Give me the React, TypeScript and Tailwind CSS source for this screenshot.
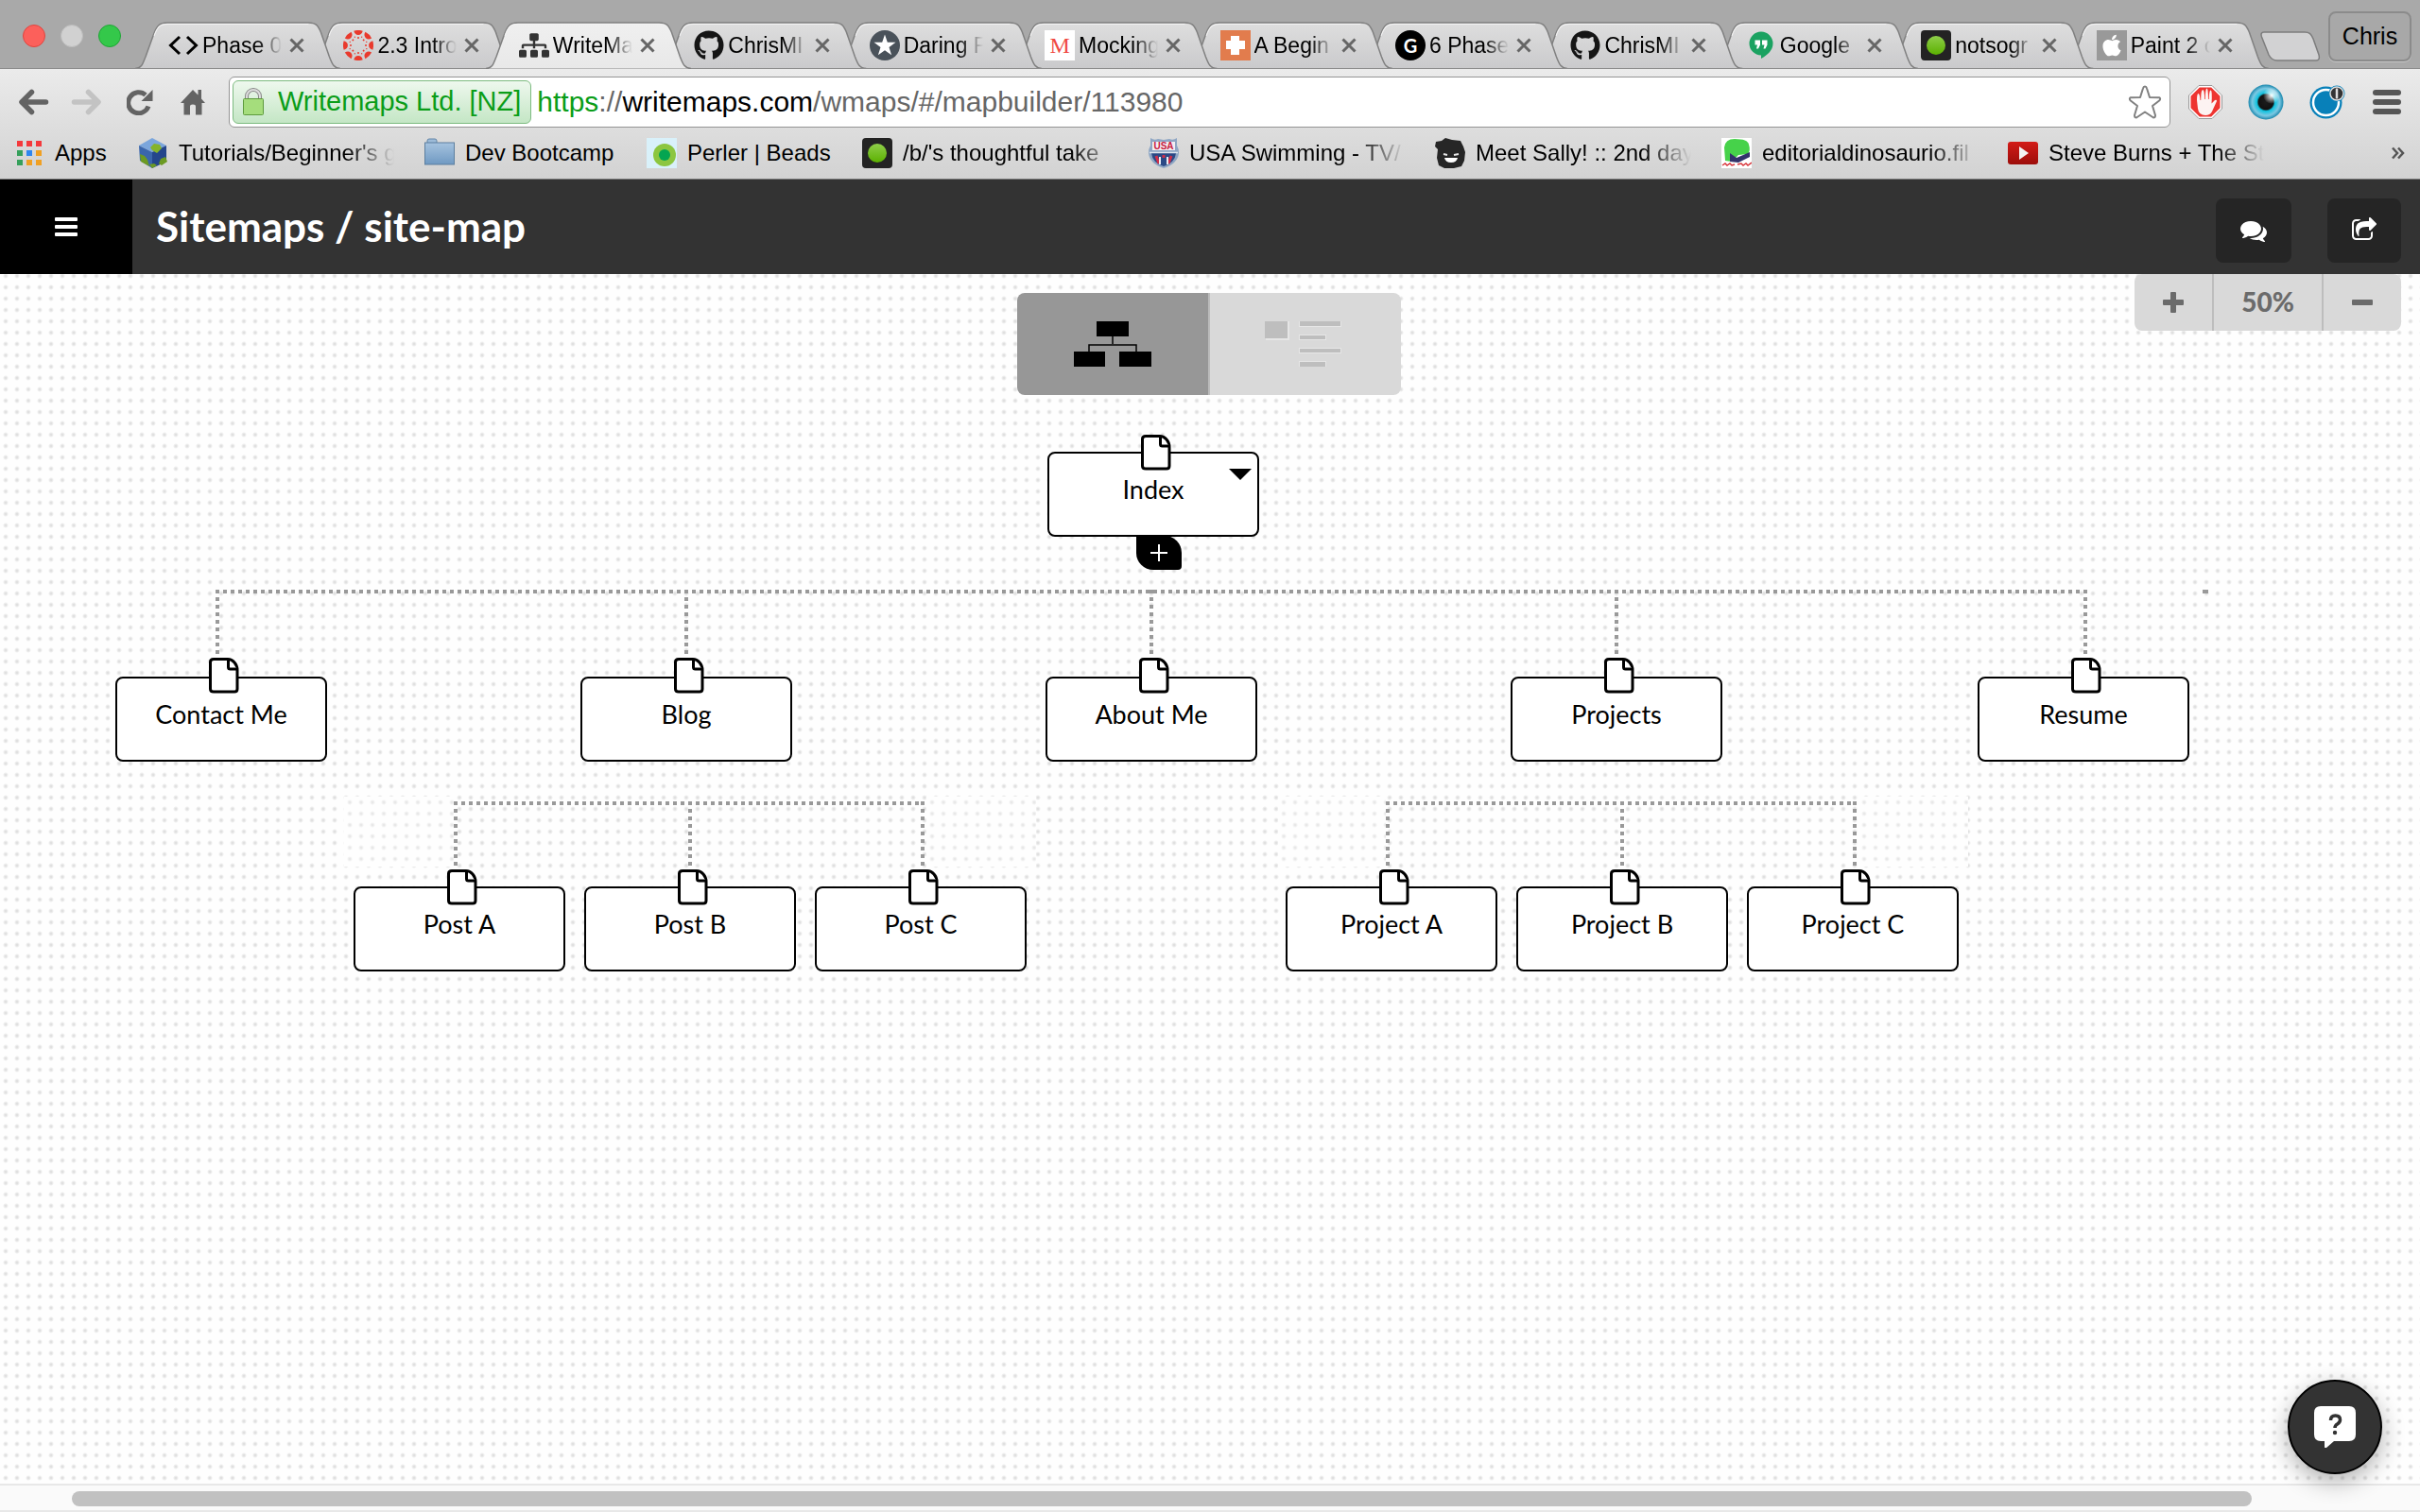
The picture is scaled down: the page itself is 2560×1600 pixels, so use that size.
import React from "react";
import type { ReactNode } from "react";
import { FaSitemap, FaGithub, FaApple } from "react-icons/fa";

/* ---------- favicons ---------- */

function CodeIcon() {
  return (
    <svg viewBox="0 0 32 32" className="size-8" fill="none" stroke="#000" strokeWidth="3">
      <path d="M12 7 2.5 16l9.5 9M20 7l9.5 9-9.5 9" />
    </svg>
  );
}

function CanvasIcon() {
  return (
    <svg viewBox="0 0 32 32" className="size-8" fill="#e93a2d">
      {[0, 45, 90, 135, 180, 225, 270, 315].map((a) => (
        <g key={a} transform={`rotate(${a} 16 16)`}>
          <path d="M11.3.7Q16-.8 20.7.7 19.8 4.8 16 4.9 12.2 4.8 11.3.7z" />
          <circle cx="16" cy="8" r="1" />
          <circle cx="16" cy="6.500" r=".7" transform="rotate(22.5 16 16)" />
        </g>
      ))}
    </svg>
  );
}

function StarIcon() {
  return (
    <svg viewBox="0 0 32 32" className="size-8">
      <circle cx="16" cy="16" r="16" fill="#4a525a" />
      <path d="M16 4.500l2.800 8.200 8.700.1-7 5.200 2.600 8.300-7.100-5-7.100 5 2.600-8.300-7-5.200 8.700-.1z" fill="#fff" />
    </svg>
  );
}

function LetterM() {
  return (
    <span className="flex size-8 items-center justify-center bg-white font-['Liberation_Serif',serif] text-[24px] leading-8 text-[#f04a42]">
      M
    </span>
  );
}

function CrossIcon() {
  return (
    <svg viewBox="0 0 32 32" className="size-8">
      <path d="M0 0h32v32H0z" fill="#e27c4d" />
      <path d="M11 6h9v5h6v9h-6v6h-9v-6H6v-9h5z" fill="#fff" />
    </svg>
  );
}

function LetterG() {
  return (
    <span className="flex size-8 items-center justify-center rounded-full bg-black font-['Lato',sans-serif] text-[20px] font-bold text-white">
      G
    </span>
  );
}

function HangoutsIcon() {
  return (
    <svg viewBox="0 0 32 32" className="size-8">
      <path d="M16 1.500a12.500 12.500 0 1 1 0 25V30C9 26 3.500 21 3.500 14A12.500 12.500 0 0 1 16 1.500z" fill="#1ba261" transform="matrix(-1 0 0 1 32 0)" />
      <path d="M9.500 10.500h5.500v5l-2 4h-2l1-4H9.500zM17 10.500h5.500v5l-2 4h-2l1-4H17z" fill="#fff" />
    </svg>
  );
}

function GreenDotIcon() {
  return (
    <svg viewBox="0 0 32 32" className="size-8">
      <defs>
        <linearGradient id="dot" x1="0" x2="0" y1="0" y2="1">
          <stop offset="0" stopColor="#8fce4a" />
          <stop offset="1" stopColor="#5bb000" />
        </linearGradient>
      </defs>
      <rect width="32" height="32" rx="4" fill="#232323" />
      <circle cx="16" cy="16" r="10" fill="url(#dot)" />
    </svg>
  );
}

function AppleIcon() {
  return (
    <span className="flex size-8 items-center justify-center bg-[#999]">
      <FaApple className="size-[26px] text-white" />
    </span>
  );
}

/* ---------- bookmark icons ---------- */

function AppsIcon() {
  const colors = ["#f4393c", "#f4393c", "#f4393c", "#36a05b", "#2e86f0", "#f0a023", "#36a05b", "#f0a023", "#f0a023"];
  return (
    <svg viewBox="0 0 26 26" className="size-[26px]">
      {colors.map((c, i) => (
        <rect key={i} x={(i % 3) * 10} y={Math.floor(i / 3) * 10} width="6" height="6" fill={c} />
      ))}
    </svg>
  );
}

function CubeIcon() {
  return (
    <svg viewBox="0 0 32 32" className="size-8">
      <path d="M15 0 1 8l14 7 15-7z" fill="#7ba6dc" />
      <path d="M1 8l14 7v17L2 24z" fill="#3a66ac" />
      <path d="M30 8l-15 7v17l15-7z" fill="#24468c" />
      <path d="M17 6l6 1 2 4-5 5-5-3-2-3z" fill="#85b32a" />
      <path d="M2 17l5 2 3 4 2 7-9-5zM24 22l5-2 2 5-6 4-3-2zM12 28l5-1 3 2-5 3z" fill="#6c9a22" />
    </svg>
  );
}

function FolderIcon() {
  return (
    <svg viewBox="0 0 32 32" className="size-8">
      <defs>
        <linearGradient id="folder" x1="0" x2="0" y1="0" y2="1">
          <stop offset="0" stopColor="#a6c3df" />
          <stop offset="1" stopColor="#6f99c2" />
        </linearGradient>
      </defs>
      <path d="M3 5V3q0-2 2-2h6q2 0 2 2v2" fill="#9dbbd8" stroke="#6386a8" />
      <rect x=".5" y="5" width="31" height="23" fill="url(#folder)" stroke="#5c7f9f" />
    </svg>
  );
}

function PerlerIcon() {
  return (
    <svg viewBox="0 0 32 32" className="size-8">
      <path d="M0 0h32v32H0z" fill="#d9f1fa" />
      <circle cx="19" cy="18" r="12" fill="#8cc63f" />
      <circle cx="19" cy="18" r="6" fill="#04a551" />
    </svg>
  );
}

function ShieldIcon() {
  return (
    <svg viewBox="0 0 32 32" className="size-8">
      <path d="M2 0q4 3 8 1l6 1 6-1q4 2 8-1v8q2 3 2 8-1 11-16 16Q1 27 0 16q0-5 2-8z" fill="#8ea6c4" />
      <path d="M4 4h24v9H4z" fill="#f3eef2" />
      <text x="16" y="12" textAnchor="middle" fontSize="10" fontWeight="700" fontFamily="Liberation Sans, sans-serif" fill="#c8203f">
        USA
      </text>
      <path d="M3 16h26q-1 10-13 14Q4 26 3 16z" fill="#2b4a86" />
      <path d="M8 19l3 8M16 18v3M24 19l-3 8" stroke="#d02f4a" strokeWidth="3" />
      <path d="M12 20v8M20 20v8" stroke="#e9edf3" strokeWidth="2" />
      <path d="M1 15.500h30" stroke="#dfe6ee" strokeWidth="1.500" />
    </svg>
  );
}

function SallyIcon() {
  return (
    <svg viewBox="0 0 32 32" className="size-8">
      <path d="M1 4l6-1 4-3 7 2 9 1 3 6 2 6-1 9-3 6-8 2H10l-6-3-2-8 1-9-3-3z" fill="#262626" />
      <path d="M9 17l4 1M20 18l5-1" stroke="#e5e5e5" strokeWidth="2" />
      <path d="M10 21h14q-1 5-7 5t-7-5z" fill="#fff" />
    </svg>
  );
}

function DinoIcon() {
  return (
    <svg viewBox="0 0 32 32" className="size-8">
      <path d="M0 0h32v32H0z" fill="#fff" />
      <path d="M3 10Q4 1 14 1q14 0 15 6 2 6-1 10l-10 1-7 7-7-1z" fill="#46d24a" />
      <path d="M9 16l7 5 14-6v5l-12 6-9-1z" fill="#33336b" />
      <path d="M1 29l3-2 2 2 3-2 2 2 3-1M17 28l4-1 2 2 3-2 2 2 4-3" stroke="#d8343a" strokeWidth="1.500" fill="none" />
    </svg>
  );
}

function PlayIcon() {
  return (
    <svg viewBox="0 0 32 32" className="size-8">
      <defs>
        <linearGradient id="play" x1="0" x2="0" y1="0" y2="1">
          <stop offset="0" stopColor="#d31b17" />
          <stop offset="1" stopColor="#9c0d0a" />
        </linearGradient>
      </defs>
      <rect y="4" width="32" height="24" rx="3" fill="url(#play)" />
      <path d="M12 9l10 7-10 7z" fill="#f3f3f3" />
    </svg>
  );
}

/* ---------- browser chrome ---------- */

type Tab = { title: string; icon: ReactNode; active?: boolean };

const tabs: Tab[] = [
  { title: "Phase 0", icon: <CodeIcon /> },
  { title: "2.3 Intro", icon: <CanvasIcon /> },
  { title: "WriteMap", icon: <FaSitemap className="size-8 text-[#333]" />, active: true },
  { title: "ChrisMI", icon: <FaGithub className="size-8 text-[#151515]" /> },
  { title: "Daring F", icon: <StarIcon /> },
  { title: "Mocking", icon: <LetterM /> },
  { title: "A Begin", icon: <CrossIcon /> },
  { title: "6 Phase", icon: <LetterG /> },
  { title: "ChrisMI", icon: <FaGithub className="size-8 text-[#151515]" /> },
  { title: "Google", icon: <HangoutsIcon /> },
  { title: "notsogr", icon: <GreenDotIcon /> },
  { title: "Paint 2 o", icon: <AppleIcon /> },
];

const tabOutline = "M0 49.500C7 49.500 8 44 11 37L20 12C23 4 26 1 34 1H183C191 1 193 4 196 11L205 37C208 45 210 49.500 217 49.500";

function BrowserTab({ tab, index }: { tab: Tab; index: number }) {
  return (
    <div role="tab" aria-selected={!!tab.active} className="relative h-[50px] min-w-0 flex-1" style={{ zIndex: tab.active ? 30 : 12 - index }}>
      <svg viewBox="0 0 217 50" preserveAspectRatio="none" className="absolute top-0 left-0 h-[50px] w-[calc(100%+32px)]">
        <path d={tabOutline} fill={tab.active ? "url(#tab-active)" : "url(#tab-idle)"} stroke="#808080" strokeWidth="1.500" />
        <path d="M20 15C23 6 26 2.500 34 2.500H183" fill="none" stroke="#f4f4f4" strokeWidth="1" />
      </svg>
      <div className="relative flex h-[50px] items-center pl-[35px]">
        <span className="size-8 shrink-0">{tab.icon}</span>
        <span className="ml-1 w-[84px] overflow-hidden text-[23px] leading-8 whitespace-nowrap text-black [mask-image:linear-gradient(to_right,black_70%,transparent_100%)]">
          {tab.title}
        </span>
        <button aria-label={`Close ${tab.title}`} className="ml-2 size-4 shrink-0">
          <svg viewBox="0 0 16 16" className="size-4" stroke="#666" strokeWidth="3">
            <path d="M1.500 1.500l13 13M14.500 1.500l-13 13" />
          </svg>
        </button>
      </div>
    </div>
  );
}

function TabStrip() {
  return (
    <div className="relative isolate flex h-[73px] items-end bg-[#a9a9a9]">
      <svg className="absolute size-0" aria-hidden="true">
        <defs>
          <linearGradient id="tab-idle" x1="0" x2="0" y1="0" y2="1">
            <stop offset="0" stopColor="#dedede" />
            <stop offset="1" stopColor="#cacacc" />
          </linearGradient>
          <linearGradient id="tab-active" x1="0" x2="0" y1="0" y2="1">
            <stop offset="0" stopColor="#f0f0f0" />
            <stop offset="1" stopColor="#e8e8e8" />
          </linearGradient>
        </defs>
      </svg>
      <div className="absolute inset-x-0 bottom-0 z-20 h-px bg-[#8c8c8c]" />
      <div className="mr-[15px] flex gap-4 self-start pt-[26px] pl-6">
        <button aria-label="Close window" className="size-6 rounded-full border border-[#e0443e] bg-[#fc605b]" />
        <button aria-label="Minimise window" className="size-6 rounded-full border border-[#bcbcbc] bg-[#d1d1d1]" />
        <button aria-label="Zoom window" className="size-6 rounded-full border border-[#1fa535] bg-[#34c84a]" />
      </div>
      <div role="tablist" className="flex min-w-0 flex-1">
        {tabs.map((tab, i) => (
          <BrowserTab key={i} tab={tab} index={i} />
        ))}
      </div>
      <button aria-label="New tab" className="mb-2 ml-[23px] h-8 w-16 shrink-0">
        <svg viewBox="0 0 64 32" className="h-8 w-16">
          <path d="M4 1h43c5 0 7 2 9 7l6 17c1 4 0 6-3 6H18c-5 0-7-2-9-6L1.500 6C.5 3 1 1 4 1z" fill="#d2d2d3" stroke="#7d7d7d" strokeWidth="1.500" />
        </svg>
      </button>
      <button className="mr-[9px] mb-2 ml-2 h-[53px] w-[88px] shrink-0 rounded-lg border-2 border-[#8b8b8b] bg-[#a8a8a8] text-[25px] shadow-[0_1px_0_#c4c4c4]">
        Chris
      </button>
    </div>
  );
}

function AddressBar() {
  return (
    <div className="relative ml-6 flex h-[54px] min-w-0 flex-1 items-center rounded-md border border-[#949494] bg-white pr-2 pl-[3px] text-[30px]">
      <div className="flex h-[46px] shrink-0 items-center rounded-md border border-[#7dbb80] bg-linear-to-b from-[#eef8ee] to-[#c4e6c5] pr-2.5 pl-[9px] text-[29px] text-[#0a9d18]">
        <svg viewBox="0 0 24 30" className="mr-3.5 h-[30px] w-6">
          <path d="M5 12V9a7 7 0 0 1 14 0v3" fill="none" stroke="#888" strokeWidth="4" />
          <path d="M5 12V9a7 7 0 0 1 14 0v3" fill="none" stroke="#ddd" strokeWidth="2" />
          <rect x="1.500" y="11.500" width="21" height="17" rx="1" fill="#a5dd7c" stroke="#5d9a3c" />
        </svg>
        <span className="whitespace-nowrap">Writemaps Ltd. [NZ]</span>
      </div>
      <div aria-hidden="true" className="ml-1.5 flex-1 whitespace-nowrap text-[#666]">
        <span className="text-[#0a9d18]">https</span>://<span className="text-black">writemaps.com</span>/wmaps/#/mapbuilder/113980
      </div>
      <input aria-label="Address" type="url" className="absolute inset-y-0 right-14 left-80 bg-transparent outline-none" />
      <button aria-label="Bookmark this page" className="size-9 shrink-0">
        <svg viewBox="0 0 36 36" className="size-9" fill="#fff" stroke="#808080" strokeWidth="2" strokeLinejoin="round">
          <path d="M18 1.500q1.500 0 2 2l3 9.500 10 .2q2 1 .5 3L26 22l3 10q0 2.500-2 2.500L18 28.500 9 34.500q-2 0-2-2.500l3-10-7.500-5.800q-1.500-2 .5-3L13 13l3-9.500q.5-2 2-2z" />
        </svg>
      </button>
    </div>
  );
}

function Toolbar() {
  return (
    <div className="flex h-[75px] items-center pt-[7px] pr-5 pb-[13px] pl-5">
      <button aria-label="Back" className="h-7 w-8">
        <svg viewBox="0 0 32 28" className="h-7 w-8" fill="none" stroke="#636363" strokeWidth="5.500" strokeLinecap="round" strokeLinejoin="round">
          <path d="M28.500 14H5M13.500 3.500L3 14l10.500 10.500" />
        </svg>
      </button>
      <button aria-label="Forward" className="ml-[23px] h-7 w-8">
        <svg viewBox="0 0 32 28" className="h-7 w-8" fill="none" stroke="#c3c3c3" strokeWidth="5.500" strokeLinecap="round" strokeLinejoin="round">
          <path d="M3.500 14H27M18.500 3.500L29 14 18.500 24.500" />
        </svg>
      </button>
      <button aria-label="Reload" className="ml-[27px] h-7 w-7">
        <svg viewBox="0 0 28 28" className="size-7">
          <path d="M23 18.500A11 11 0 1 1 20 6.500" fill="none" stroke="#636363" strokeWidth="5" />
          <path d="M27.500 1v12H15.500z" fill="#636363" />
        </svg>
      </button>
      <button aria-label="Home" className="ml-7 h-7 w-7">
        <svg viewBox="0 0 28 28" className="size-7" fill="#636363">
          <path d="M14 1L1 15h3.500v12.500H11V18.500q0-2 3-2t3 2v9h6.500V15H27l-4-4.500V1h-3.500v5.500z" />
        </svg>
      </button>
      <AddressBar />
      <div className="ml-[19px] flex items-center gap-[27px]">
        <button aria-label="Content blocker" className="size-9">
          <svg viewBox="0 0 36 36" className="size-9">
            <path d="M11 .5h14L35.500 11v14L25 35.500H11L.5 25V11z" fill="#fff" stroke="#999" />
            <path d="M11.800 2.500h12.400l9.300 9.300v12.400l-9.300 9.300H11.800l-9.300-9.300V11.800z" fill="#ee3430" />
            <path d="M9 16q0-7 1.500-7t2 7h.7q0-11 2-11t1.800 10h.7Q18 3.500 19.500 3.500T21 15h.7q.3-10 2-9.500t.8 14l3.500-3.500q2-1 2 1l-5 11q-2 4-7 4-7 0-8-7z" fill="#fdf3f2" />
          </svg>
        </button>
        <button aria-label="Lens" className="size-[38px]">
          <svg viewBox="0 0 38 38" className="size-[38px]">
            <defs>
              <radialGradient id="lens">
                <stop offset="0" stopColor="#1c1c1c" />
                <stop offset=".42" stopColor="#111" />
                <stop offset=".52" stopColor="#11c3e0" />
                <stop offset=".78" stopColor="#7cc8e2" />
                <stop offset="1" stopColor="#1987ad" />
              </radialGradient>
              <radialGradient id="glare">
                <stop offset="0" stopColor="#fff" />
                <stop offset="1" stopColor="#fff" stopOpacity="0" />
              </radialGradient>
            </defs>
            <circle cx="19" cy="19" r="18.500" fill="url(#lens)" />
            <circle cx="25" cy="12" r="9" fill="url(#glare)" />
          </svg>
        </button>
        <button aria-label="Tracker" className="size-[38px]">
          <svg viewBox="0 0 38 38" className="size-[38px]">
            <circle cx="17.500" cy="19.500" r="17" fill="#0880b9" />
            <circle cx="17.500" cy="19.500" r="13.500" fill="none" stroke="#fff" strokeWidth="2.500" />
            <circle cx="29" cy="10" r="8.500" fill="#0880b9" />
            <circle cx="29" cy="10" r="7" fill="#333" stroke="#ddd" strokeWidth="1.500" />
            <path d="M29 4.500v11" stroke="#ddd" strokeWidth="2.500" />
          </svg>
        </button>
        <button aria-label="Menu" className="ml-0.5 h-7 w-[30px]">
          <svg viewBox="0 0 30 28" className="h-7 w-[30px]" fill="#565656">
            <rect y="1" width="30" height="6" rx="3" />
            <rect y="11" width="30" height="6" rx="3" />
            <rect y="21" width="30" height="6" rx="3" />
          </svg>
        </button>
      </div>
    </div>
  );
}

const bookmarks: { label: string; icon: ReactNode; faded?: boolean; width: string }[] = [
  { label: "Tutorials/Beginner's g", icon: <CubeIcon />, faded: true, width: "w-[228px]" },
  { label: "Dev Bootcamp", icon: <FolderIcon />, width: "w-40" },
  { label: "Perler | Beads", icon: <PerlerIcon />, width: "w-[153px]" },
  { label: "/b/'s thoughtful take", icon: <GreenDotIcon />, faded: true, width: "w-[228px]" },
  { label: "USA Swimming - TV/", icon: <ShieldIcon />, faded: true, width: "w-[228px]" },
  { label: "Meet Sally! :: 2nd day", icon: <SallyIcon />, faded: true, width: "w-[228px]" },
  { label: "editorialdinosaurio.fil", icon: <DinoIcon />, faded: true, width: "w-[228px]" },
  { label: "Steve Burns + The St", icon: <PlayIcon />, faded: true, width: "w-[228px]" },
];

function BookmarksBar() {
  return (
    <nav aria-label="Bookmarks" className="flex h-[41px] items-start pr-4 pl-[18px] text-[24px] leading-7 text-black">
      <a href="#apps" className="flex h-7 w-24 shrink-0 items-center gap-3.5">
        <AppsIcon />
        Apps
      </a>
      <div className="ml-8 flex min-w-0 flex-1 gap-8">
        {bookmarks.map((b) => (
          <a key={b.label} href="#bookmark" className="flex h-7 shrink-0 items-center gap-[11px]">
            {b.icon}
            <span
              className={`whitespace-nowrap ${b.width} ${b.faded ? "overflow-hidden [mask-image:linear-gradient(to_right,black_78%,transparent_100%)]" : ""}`}
            >
              {b.label}
            </span>
          </a>
        ))}
      </div>
      <button aria-label="More bookmarks" className="h-7">
        <svg viewBox="0 0 14 14" className="size-3.5" fill="none" stroke="#555" strokeWidth="2.500">
          <path d="M1 1.500l5 5.500-5 5.500M7 1.500l5 5.500-5 5.500" />
        </svg>
      </button>
    </nav>
  );
}

/* ---------- site map application ---------- */

function AppHeader() {
  return (
    <header className="flex h-[100px] items-center bg-[#333] pr-5 text-white">
      <button aria-label="Menu" className="flex h-full w-[140px] items-center justify-center bg-black">
        <svg viewBox="0 0 24 20" className="h-5 w-6" fill="#fff">
          <rect width="24" height="4" rx="1" />
          <rect y="8" width="24" height="4" rx="1" />
          <rect y="16" width="24" height="4" rx="1" />
        </svg>
      </button>
      <h1 className="ml-[25px] flex-1 pb-0.5 text-[44px] leading-[52px] font-bold">Sitemaps / site-map</h1>
      <div className="flex gap-[38px] pt-2">
        <button aria-label="Comments" className="flex h-[68px] w-20 items-center justify-center rounded-lg bg-[#252525]">
          <svg viewBox="0 0 1792 1792" className="size-7" fill="#fff">
            <path d="M1408 768q0 139-94 257t-256.500 186.500-353.500 68.500q-86 0-176-16-124 88-278 128-36 9-86 16h-3q-11 0-20.500-8t-11.500-21q-1-3-1-6.500t.5-6.500 2-6l2.500-5 3.500-5.500 4-5 4.500-5 4-4.500q5-6 23-25t26-29.500 22.500-29 25-38.500 20.500-44q-124-72-195-177t-71-224q0-139 94-257t256.500-186.500 353.500-68.500 353.500 68.500 256.500 186.500 94 257zm384 256q0 120-71 224.500t-195 176.500q10 24 20.500 44t25 38.500 22.500 29 26 29.500 23 25q1 1 4 4.500t4.500 5 4 5 3.500 5.500l2.500 5 2 6 .5 6.500-1 6.500q-3 14-13 22t-22 7q-50-7-86-16-154-40-278-128-90 16-176 16-271 0-472-132 58 4 88 4 161 0 309-45t264-129q125-92 192-212t67-254q0-77-23-152 129 71 204 178t75 230z" />
          </svg>
        </button>
        <button aria-label="Share" className="flex h-[68px] w-[78px] items-center justify-center rounded-lg bg-[#252525]">
          <svg viewBox="0 0 1792 1792" className="size-7" fill="#fff">
            <path d="M1472 989v259q0 119-84.500 203.500t-203.500 84.500h-832q-119 0-203.500-84.500t-84.500-203.500v-832q0-119 84.500-203.500t203.500-84.500h255q13 0 22.500 9.500t9.500 22.500q0 27-26 32-77 26-133 60-10 4-16 4h-112q-66 0-113 47t-47 113v832q0 66 47 113t113 47h832q66 0 113-47t47-113v-214q0-19 18-29 28-13 54-37 16-16 35-8 21 9 21 29zm237-496l-384 384q-18 19-45 19-12 0-25-5-39-17-39-59v-192h-160q-323 0-438 131-119 137-74 473 3 23-20 34-8 2-12 2-16 0-26-13-10-14-21-31t-39.500-68.500-49.500-99.500-38.500-114-17.500-122q0-49 3.500-91t14-90 28-88 47-81.500 68.500-74 94.500-61.500 124.500-48.500 159.500-30.500 196.500-11h160v-192q0-42 39-59 13-5 25-5 26 0 45 19l384 384q19 19 19 45t-19 45z" />
          </svg>
        </button>
      </div>
    </header>
  );
}

function ZoomControl() {
  return (
    <div className="absolute top-0 right-5 flex h-[60px] divide-x-2 divide-[#bdbdbd] overflow-hidden rounded-lg bg-[#d9d9d9] text-[#6b6b6b]">
      <button aria-label="Zoom in" className="flex w-[84px] items-center justify-center">
        <svg viewBox="0 0 22 22" className="size-[22px]" fill="currentColor">
          <path d="M8 1q0-1 1-1h4q1 0 1 1v7h7q1 0 1 1v4q0 1-1 1h-7v7q0 1-1 1H9q-1 0-1-1v-7H1q-1 0-1-1V9q0-1 1-1h7z" />
        </svg>
      </button>
      <span className="flex w-[116px] items-center justify-center pb-0.5 text-[28px] font-black">50%</span>
      <button aria-label="Zoom out" className="flex w-[82px] items-center justify-center">
        <svg viewBox="0 0 22 22" className="size-[22px]" fill="currentColor">
          <rect y="8" width="22" height="6" rx="1" />
        </svg>
      </button>
    </div>
  );
}

function ViewSwitch() {
  return (
    <div className="flex h-[108px] overflow-hidden rounded-lg">
      <button aria-label="Tree view" aria-pressed="true" className="flex w-[204px] items-center justify-center border-r-2 border-[#bbb] bg-[#979797]">
        <svg viewBox="0 0 82 48" className="h-12 w-[82px]">
          <path d="M24 0h34v16H24zM0 32h33v16H0zM48 32h34v16H48z" />
          <path d="M41 16v8M16 32v-7h50v7" fill="none" stroke="#000" strokeWidth="1.500" />
        </svg>
      </button>
      <button aria-label="Outline view" aria-pressed="false" className="flex w-[202px] items-center justify-center bg-[#d9d9d9] pr-1">
        <svg viewBox="0 0 82 48" className="h-12 w-[82px]">
          <path d="M1 0h25v20H1zM36 0h45v6H36zM36 14h29v6H36zM36 28h45v6H36zM36 42h29v6H36z" fill="#e6e6e6" />
          <path d="M0 0h24v18H0zM37 0h43v5H37zM37 15h27v4H37zM37 29h43v4H37zM37 43h27v5H37z" fill="#bebebe" />
        </svg>
      </button>
    </div>
  );
}

type MapNode = { label: string; x: number; y: number; iconLift: "high" | "low" };

/* Coordinates are measured from the canvas's top left corner. */
const nodes: MapNode[] = [
  { label: "Index", x: 1108, y: 188, iconLift: "low" },
  { label: "Contact Me", x: 122, y: 426, iconLift: "high" },
  { label: "Blog", x: 614, y: 426, iconLift: "high" },
  { label: "About Me", x: 1106, y: 426, iconLift: "high" },
  { label: "Projects", x: 1598, y: 426, iconLift: "high" },
  { label: "Resume", x: 2092, y: 426, iconLift: "high" },
  { label: "Post A", x: 374, y: 648, iconLift: "low" },
  { label: "Post B", x: 618, y: 648, iconLift: "low" },
  { label: "Post C", x: 862, y: 648, iconLift: "low" },
  { label: "Project A", x: 1360, y: 648, iconLift: "low" },
  { label: "Project B", x: 1604, y: 648, iconLift: "low" },
  { label: "Project C", x: 1848, y: 648, iconLift: "low" },
];

const branches = [
  { y: 336, drop: 404, columns: [230, 726, 1218, 1710, 2206] },
  { y: 560, drop: 626, columns: [482, 730, 976] },
  { y: 560, drop: 626, columns: [1468, 1716, 1962] },
];

const patches = [
  { x: 364, w: 116 },
  { x: 980, w: 116 },
  { x: 1352, w: 114 },
  { x: 1966, w: 116 },
];

function PageIcon() {
  return (
    <svg viewBox="0 0 32 38" className="h-[38px] w-8" fill="#fff" stroke="#000" strokeWidth="3" strokeLinejoin="round">
      <path d="M5 1.500h15q4 0 7 3.500t3 8V33q0 3-3 3H5q-3.500 0-3.500-3V4.500q0-3 3.500-3z" />
      <path d="M20.500 2v8q0 2 2 2H30" />
    </svg>
  );
}

function NodeCard({ node }: { node: MapNode }) {
  const isRoot = node.label === "Index";
  return (
    <div className="absolute" style={{ left: node.x, top: node.y }}>
      <button className="flex h-[90px] w-56 justify-center rounded-lg border-2 border-black bg-white pt-[21px] text-[27px] leading-[34px] text-black">
        {node.label}
      </button>
      <span className={node.iconLift === "high" ? "absolute -top-5 left-[99px]" : "absolute -top-[18px] left-[99px]"}>
        <PageIcon />
      </span>
      {isRoot && (
        <>
          <button aria-label="Page options" className="absolute top-[18px] right-2 h-3 w-6">
            <svg viewBox="0 0 24 12" className="h-3 w-6">
              <path d="M0 0h24L12 12z" />
            </svg>
          </button>
          <button
            aria-label="Add page"
            className="absolute top-[89px] left-[94px] flex h-9 w-12 items-center justify-center rounded-tl-none rounded-tr-[18px] rounded-br-sm rounded-bl-[18px] bg-black"
          >
            <svg viewBox="0 0 18 18" className="size-[18px]" stroke="#fff" strokeWidth="2">
              <path d="M9 0v18M0 9h18" />
            </svg>
          </button>
        </>
      )}
    </div>
  );
}

function Connectors() {
  return (
    <svg className="absolute top-0 left-0 h-[720px] w-[2400px]" stroke="#999" strokeWidth="4" strokeDasharray="4 4" fill="none">
      {branches.map((b, i) => (
        <g key={i}>
          <path d={`M${b.columns[0] - 2} ${b.y}H${b.columns[b.columns.length - 1] + 2}`} />
          {b.columns.map((x) => (
            <path key={x} d={`M${x} ${b.y - 2}V${b.drop}`} />
          ))}
        </g>
      ))}
      <path d="M2330 336h6" strokeDasharray="none" />
    </svg>
  );
}

function MapCanvas() {
  return (
    <main className="relative min-h-[1280px] flex-1 overflow-hidden bg-[#fefefe] bg-[radial-gradient(circle,#dcdcdc_0px,#e2e2e2_1px,transparent_3px)] bg-size-[12px_12px] bg-position-[0px_8px]">
      {patches.map((p) => (
        <div
          key={p.x}
          className="absolute top-[553px] h-[74px] bg-[#fefefe] bg-[radial-gradient(circle,#e4e4e4_0px,#eaeaea_1px,transparent_3px)] bg-size-[12px_12px]"
          style={{ left: p.x, width: p.w }}
        />
      ))}
      <Connectors />
      {nodes.map((n) => (
        <NodeCard key={n.label} node={n} />
      ))}
      <div className="relative flex justify-center pt-5 pr-0.5">
        <ViewSwitch />
      </div>
      <ZoomControl />
    </main>
  );
}

export default function App() {
  return (
    <div className="relative flex min-h-screen flex-col bg-white font-['Liberation_Sans',Arial,sans-serif]">
      <TabStrip />
      <div className="border-b border-[#7c7c7c] bg-linear-to-b from-[#ebebeb] to-[#d2d2d2]">
        <Toolbar />
        <BookmarksBar />
      </div>
      <div className="flex flex-1 flex-col font-['Lato',sans-serif]">
        <AppHeader />
        <MapCanvas />
        <div className="h-[30px] border-y-2 border-[#e8e8e8] bg-[#fafafa] pt-1.5 pr-[178px] pl-[76px]">
          <div className="h-4 rounded-full bg-[#c1c1c1]" />
        </div>
      </div>
      <button
        aria-label="Help"
        className="absolute right-10 bottom-10 flex size-[100px] items-center justify-center rounded-full border-2 border-black bg-[#333] shadow-[0_8px_24px_rgba(0,0,0,0.3)]"
      >
        <svg viewBox="0 0 44 44" className="size-11">
          <path d="M7 0h30q7 0 7 7v23q0 7-7 7H21l-8 7q-2 .5-2-1v-6H7q-7 0-7-7V7q0-7 7-7z" fill="#fff" />
          <path d="M17.500 15q0-5 5-5t5 4.500q0 2.500-3 4.500-2.500 1.500-2.500 4" fill="none" stroke="#333" strokeWidth="3.500" />
          <circle cx="22" cy="28" r="2.200" fill="#333" />
        </svg>
      </button>
    </div>
  );
}
